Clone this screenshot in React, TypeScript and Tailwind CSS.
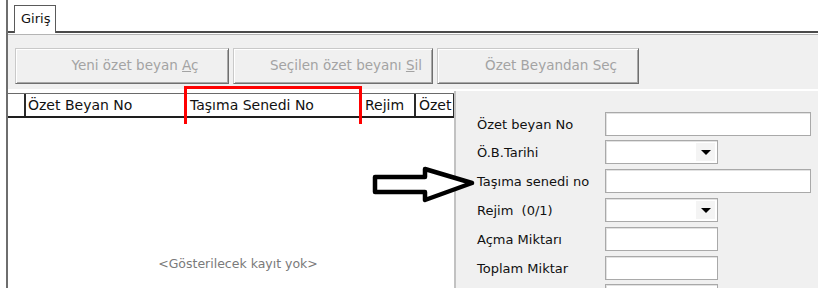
import React from "react";

function Btn({ children, w }: { children: React.ReactNode; w: string }) {
  return (
    <div
      className={`${w} h-[36px] flex items-center justify-center pl-[26px] border border-t-[#c9c9c9] border-l-[#c9c9c9] border-r-[#6f6f6f] border-b-[#6f6f6f] shadow-[inset_1px_1px_0_#ffffff,inset_-1px_-1px_0_#a8a8a8] bg-[#f0f0f0] text-[#a3a3a3] text-[13.5px] whitespace-nowrap`}
    >
      <span>{children}</span>
    </div>
  );
}

function TextBox({ w }: { w: string }) {
  return (
    <div className={`${w} h-[24px] bg-white border border-[#a9a9a9] shadow-[inset_1px_1px_0_#e2e2e2]`} />
  );
}

function Combo() {
  return (
    <div className="w-[113px] h-[24px] bg-white border border-[#a9a9a9] shadow-[inset_1px_1px_0_#e2e2e2] flex justify-end p-[2px]">
      <div className="w-[19px] h-full bg-[#f4f4f4] flex items-center justify-center">
        <svg width="10" height="5" viewBox="0 0 10 5">
          <polygon points="0,0 10,0 5,5" fill="#000" />
        </svg>
      </div>
    </div>
  );
}

function Row({ label, children, mt }: { label: string; children: React.ReactNode; mt: string }) {
  return (
    <div className={`flex items-center h-[24px] ${mt}`}>
      <div className="w-[149px] pl-[21px] whitespace-pre">{label}</div>
      {children}
    </div>
  );
}

export default function App() {
  return (
    <div className="relative w-[830px] h-[304px] bg-white overflow-hidden font-['DejaVu_Sans',sans-serif] text-[13px] leading-none text-[#111]">
      <div className="ml-[6px] w-[812px] h-[288px] border-l-2 border-[#6e6e6e] flex flex-col overflow-hidden">
        {/* tab strip */}
        <div className="h-[33px] -ml-[8px] flex items-end shrink-0">
          <div className="w-[14px] h-[2px] bg-[#4a4a4a]" />
          <div className="w-[42px] h-[28px] border border-b-0 border-[#5a5a5a] bg-white flex items-center pl-[6px] pb-[2px]">
            Giriş
          </div>
          <div className="flex-1 h-[2px] bg-[#4a4a4a]" />
        </div>
        {/* buttons */}
        <div className="mt-px border-t border-[#b4b4b4] bg-[#f0f0f0] h-[55px] shrink-0 flex gap-[4px] pl-[7px] pt-[13px]">
          <Btn w="w-[214px]">
            Yeni özet beyan <span className="underline">A</span>ç
          </Btn>
          <Btn w="w-[200px]">
            Seçilen özet beyanı <span className="underline">S</span>il
          </Btn>
          <Btn w="w-[202px]">Özet Beyandan Seç</Btn>
        </div>
        {/* lower */}
        <div className="mt-[2px] flex-1 flex min-h-0">
          <div className="w-[448px] flex flex-col border-r-2 border-[#c2c2c2] bg-white pt-[2px]">
            <div className="h-[25px] flex border-t border-[#6a6a6a] border-b-2 border-b-[#1e1e1e] bg-white shrink-0 text-[14px]">
              <div className="w-[18px] border-r-2 border-[#2a2a2a]" />
              <div className="w-[161px] border-r-2 border-[#2a2a2a] pl-[2px] flex items-center whitespace-nowrap">Özet Beyan No</div>
              <div className="w-[175px] border-r-2 border-[#2a2a2a] pl-[3px] flex items-center whitespace-nowrap">Taşıma Senedi No</div>
              <div className="w-[54px] border-r-2 border-[#2a2a2a] pl-[3px] flex items-center whitespace-nowrap">Rejim</div>
              <div className="flex-1 pl-[3px] flex items-center whitespace-nowrap overflow-hidden border-r border-[#2a2a2a]">Özet</div>
            </div>
            <div className="flex-1 flex items-end justify-center pl-[14px] pb-[18px] text-[#7a7a7a] text-[12.5px]">
              &lt;Gösterilecek kayıt yok&gt;
            </div>
          </div>
          <div className="flex-1 bg-[#f0f0f0] pt-[21px] overflow-hidden">
            <Row label="Özet beyan No" mt="">
              <TextBox w="w-[206px]" />
            </Row>
            <Row label="Ö.B.Tarihi" mt="mt-[4px]">
              <Combo />
            </Row>
            <Row label="Taşıma senedi no" mt="mt-[5px]">
              <TextBox w="w-[206px]" />
            </Row>
            <Row label="Rejim  (0/1)" mt="mt-[5px]">
              <Combo />
            </Row>
            <Row label="Açma Miktarı" mt="mt-[5px]">
              <TextBox w="w-[113px]" />
            </Row>
            <Row label="Toplam Miktar" mt="mt-[5px]">
              <TextBox w="w-[113px]" />
            </Row>
            <Row label="" mt="mt-[4px]">
              <TextBox w="w-[113px]" />
            </Row>
          </div>
        </div>
      </div>

      {/* red highlight annotation */}
      <div className="absolute left-[184px] top-[86px] w-[178px] h-[38px] border-[3px] border-b-0 border-[#ff0000]" />

      {/* arrow annotation */}
      <svg className="absolute left-[368px] top-[162px]" width="112" height="46" viewBox="368 162 112 46">
        <polygon
          points="375,177 425,177 425,169 472,183 425,200 425,192 375,192"
          fill="#fff"
          stroke="#000"
          strokeWidth="4.5"
          strokeLinejoin="round"
        />
      </svg>
    </div>
  );
}
